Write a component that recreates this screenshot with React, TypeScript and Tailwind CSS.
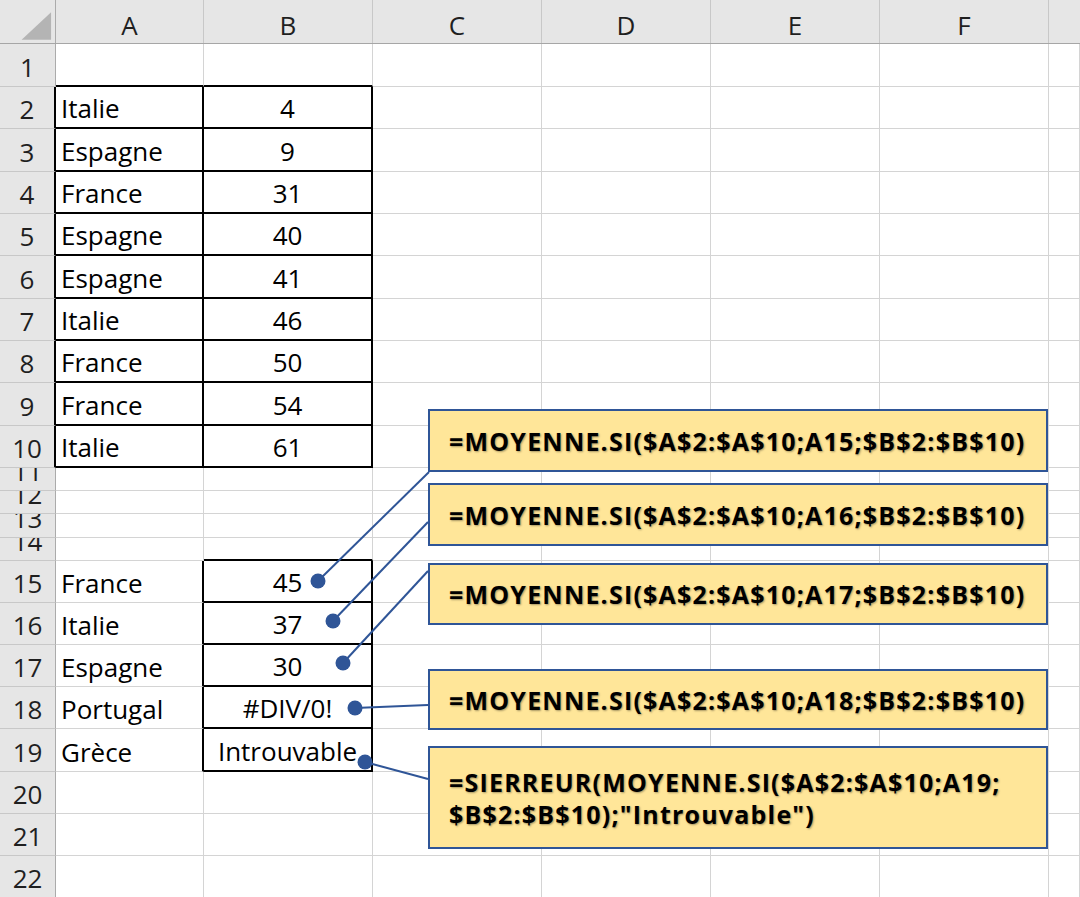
import React from 'react';

type Row = {
  n: number;
  h: string;
  a?: string;
  b?: string;
  boxAB?: boolean; // A and B framed (rows 2-10)
  boxB?: boolean; // only B framed (rows 15-19)
  topAB?: boolean; // row above A2:B10 -> black bottom on A/B
  topB?: boolean; // row above B15 -> black bottom on B
};

const rows: Row[] = [
  { n: 1, h: 'h-[43px]', topAB: true },
  { n: 2, h: 'h-[42px]', a: 'Italie', b: '4', boxAB: true },
  { n: 3, h: 'h-[43px]', a: 'Espagne', b: '9', boxAB: true },
  { n: 4, h: 'h-[42px]', a: 'France', b: '31', boxAB: true },
  { n: 5, h: 'h-[42px]', a: 'Espagne', b: '40', boxAB: true },
  { n: 6, h: 'h-[43px]', a: 'Espagne', b: '41', boxAB: true },
  { n: 7, h: 'h-[42px]', a: 'Italie', b: '46', boxAB: true },
  { n: 8, h: 'h-[42px]', a: 'France', b: '50', boxAB: true },
  { n: 9, h: 'h-[43px]', a: 'France', b: '54', boxAB: true },
  { n: 10, h: 'h-[42px]', a: 'Italie', b: '61', boxAB: true },
  { n: 11, h: 'h-[23px]' },
  { n: 12, h: 'h-[23px]' },
  { n: 13, h: 'h-[24px]' },
  { n: 14, h: 'h-[23px]', topB: true },
  { n: 15, h: 'h-[42px]', a: 'France', b: '45', boxB: true },
  { n: 16, h: 'h-[42px]', a: 'Italie', b: '37', boxB: true },
  { n: 17, h: 'h-[42px]', a: 'Espagne', b: '30', boxB: true },
  { n: 18, h: 'h-[42px]', a: 'Portugal', b: '#DIV/0!', boxB: true },
  { n: 19, h: 'h-[43px]', a: 'Grèce', b: 'Introuvable', boxB: true },
  { n: 20, h: 'h-[42px]' },
  { n: 21, h: 'h-[42px]' },
  { n: 22, h: 'h-[42px]' },
];

const callouts = [
  { top: 'top-[409px] h-[63px]', lines: ['=MOYENNE.SI($A$2:$A$10;A15;$B$2:$B$10)'] },
  { top: 'top-[483px] h-[63px]', lines: ['=MOYENNE.SI($A$2:$A$10;A16;$B$2:$B$10)'] },
  { top: 'top-[563px] h-[62px]', lines: ['=MOYENNE.SI($A$2:$A$10;A17;$B$2:$B$10)'] },
  { top: 'top-[669px] h-[61px]', lines: ['=MOYENNE.SI($A$2:$A$10;A18;$B$2:$B$10)'] },
  {
    top: 'top-[746px] h-[103px]',
    lines: ['=SIERREUR(MOYENNE.SI($A$2:$A$10;A19;', '$B$2:$B$10);"Introuvable")'],
  },
];

const connectors = [
  { x1: 318, y1: 581, x2: 429, y2: 472 },
  { x1: 333, y1: 621, x2: 428, y2: 522 },
  { x1: 343, y1: 663, x2: 428, y2: 571 },
  { x1: 355, y1: 708, x2: 428, y2: 705 },
  { x1: 365, y1: 762, x2: 428, y2: 779 },
];

const font = "font-['Open_Sans',_'Noto_Sans',_sans-serif]";

function SheetRow({ r }: { r: Row }) {
  const grid = 'border-r border-b border-[#d4d4d4]';
  const aCls = r.boxAB
    ? 'border-r-2 border-b-2 border-black'
    : r.boxB
    ? 'border-r-2 border-b border-r-black border-b-[#d4d4d4]'
    : r.topAB
    ? 'border-r border-b-2 border-r-[#d4d4d4] border-b-black'
    : grid;
  const bCls = r.boxAB || r.boxB
    ? 'border-r-2 border-b-2 border-black'
    : r.topAB || r.topB
    ? 'border-r border-b-2 border-r-[#d4d4d4] border-b-black'
    : grid;

  return (
    <div className={`flex ${r.h}`}>
      <div
        className={`w-[56px] shrink-0 flex items-end justify-center overflow-hidden bg-[#e6e6e6] border-b border-b-[#c8c8c8] pb-[6px] text-[26px] leading-none text-[#1f1f1f] ${
          r.boxAB ? 'border-r-2 border-r-black' : 'border-r border-r-[#ababab]'
        }`}
      >
        {r.n}
      </div>
      <div className={`w-[148px] shrink-0 flex items-end overflow-hidden pl-[5px] pb-[6px] text-[26px] leading-none text-black ${aCls}`}>
        {r.a}
      </div>
      <div className={`w-[169px] shrink-0 flex items-end justify-center overflow-hidden whitespace-nowrap pb-[6px] text-[26px] leading-none text-black ${bCls}`}>
        {r.b}
      </div>
      <div className={`w-[169px] shrink-0 ${grid}`} />
      <div className={`w-[169px] shrink-0 ${grid}`} />
      <div className={`w-[169px] shrink-0 ${grid}`} />
      <div className={`w-[169px] shrink-0 ${grid}`} />
      <div className={`flex-1 ${grid}`} />
    </div>
  );
}

export default function App() {
  return (
    <div className={`relative w-[1080px] h-[897px] overflow-hidden bg-white ${font}`}>
      {/* column header */}
      <div className="flex h-[44px] bg-[#e6e6e6] border-b border-b-[#a6a6a6] text-[26px] leading-none text-[#1f1f1f]">
        <div className="w-[56px] shrink-0 border-r border-r-[#ababab] flex items-end justify-end">
          <svg width="56" height="43" viewBox="0 0 56 43">
            <polygon points="22,40 52,40 52,12" fill="#b4b4b4" />
          </svg>
        </div>
        {['A', 'B', 'C', 'D', 'E', 'F'].map((c, i) => (
          <div
            key={c}
            className={`${i === 0 ? 'w-[148px]' : 'w-[169px]'} shrink-0 flex items-center justify-center pt-[6px] border-r border-r-[#c8c8c8]`}
          >
            {c}
          </div>
        ))}
        <div className="flex-1" />
      </div>

      {rows.map((r) => (
        <SheetRow key={r.n} r={r} />
      ))}

      {/* connectors */}
      <svg className="absolute inset-0 pointer-events-none" width="1080" height="897" viewBox="0 0 1080 897">
        {connectors.map((c, i) => (
          <g key={i}>
            <line x1={c.x1} y1={c.y1} x2={c.x2} y2={c.y2} stroke="#2f5597" strokeWidth="2" />
            <circle cx={c.x1} cy={c.y1} r="7.5" fill="#2f5597" />
          </g>
        ))}
      </svg>

      {/* formula callouts */}
      {callouts.map((c, i) => (
        <div
          key={i}
          className={`absolute left-[428px] w-[620px] ${c.top} bg-[#ffe699] border-2 border-[#2f5597] flex flex-col justify-center pl-[19px] text-[25px] tracking-[1.2px] leading-[32px] font-bold text-black whitespace-nowrap [text-shadow:1px_1px_2px_rgba(0,0,0,0.35)]`}
        >
          {c.lines.map((l) => (
            <div key={l}>{l}</div>
          ))}
        </div>
      ))}
    </div>
  );
}
